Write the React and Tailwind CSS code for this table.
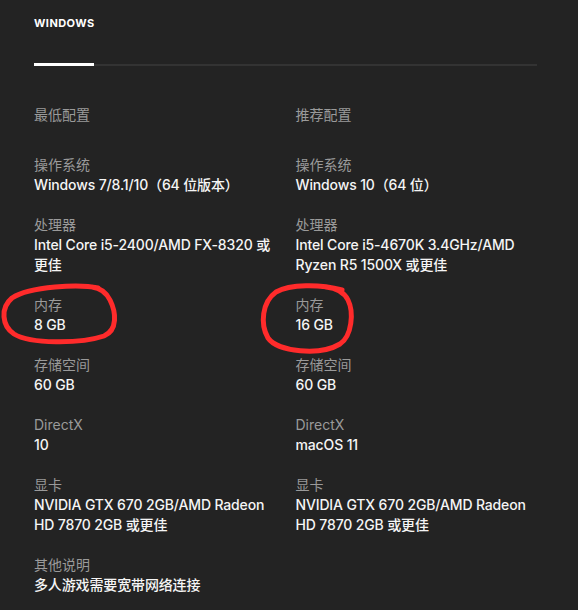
const MIN_SPECS = [
    { label: "操作系统", value: ["Windows 7/8.1/10（64 位版本）"] },
    { label: "处理器", value: ["Intel Core i5-2400/AMD FX-8320 或", "更佳"] },
    { label: "内存", value: ["8 GB"] },
    { label: "存储空间", value: ["60 GB"] },
    { label: "DirectX", value: ["10"] },
    { label: "显卡", value: ["NVIDIA GTX 670 2GB/AMD Radeon", "HD 7870 2GB 或更佳"] },
    { label: "其他说明", value: ["多人游戏需要宽带网络连接"] }
];

const REC_SPECS = [
    { label: "操作系统", value: ["Windows 10（64 位）"] },
    { label: "处理器", value: ["Intel Core i5-4670K 3.4GHz/AMD", "Ryzen R5 1500X 或更佳"] },
    { label: "内存", value: ["16 GB"] },
    { label: "存储空间", value: ["60 GB"] },
    { label: "DirectX", value: ["macOS 11"] },
    { label: "显卡", value: ["NVIDIA GTX 670 2GB/AMD Radeon", "HD 7870 2GB 或更佳"] }
];

function SpecColumn({ title, specs }) {
    return (
        <div className="flex flex-col">
            <div className="text-[14px] leading-5 text-[#9a9a9a] mb-[30px]">{title}</div>
            {specs.map((spec) => (
                <div key={spec.label} className="mb-5 text-[14px] leading-5">
                    <div className="text-[#9a9a9a]">{spec.label}</div>
                    {spec.value.map((line) => (
                        <div key={line} className="text-[#f5f5f5] font-medium tracking-[-0.01em] whitespace-nowrap">{line}</div>
                    ))}
                </div>
            ))}
        </div>
    );
}

export default function App() {
    return (
        <div
            className="relative w-[578px] h-[610px] overflow-hidden bg-[#232323] px-[34px]"
            style={{ fontFamily: '"Inter", "Noto Sans CJK SC", sans-serif' }}
        >
            <div className="pt-[15px]">
                <div className="text-[11px] leading-4 font-bold tracking-[0.04em] text-white">WINDOWS</div>
                <div className="mt-[32px] flex items-end w-[503px]">
                    <div className="w-[60px] h-[3px] bg-white" />
                    <div className="flex-1 h-[2px] bg-[#333333]" />
                </div>
            </div>

            <div className="mt-[39px] grid grid-cols-2 gap-x-5 w-[503px]">
                <SpecColumn title="最低配置" specs={MIN_SPECS} />
                <SpecColumn title="推荐配置" specs={REC_SPECS} />
            </div>

            {/* hand-drawn red annotations */}
            <svg className="absolute left-0 top-0 pointer-events-none" width="578" height="610">
                <path
                    d="M98 288 C80 284 30 286 12 298 C0 308 2 326 14 334 C30 344 80 344 104 336 C118 330 116 312 110 300 C106 292 100 288 92 287"
                    fill="none"
                    stroke="#ff2b2b"
                    strokeWidth="5"
                    strokeLinecap="round"
                />
                <path
                    d="M342 290 C320 284 290 284 276 292 C262 302 260 324 268 338 C278 352 320 356 340 344 C352 336 354 312 348 300 C344 292 336 288 326 287"
                    fill="none"
                    stroke="#ff2b2b"
                    strokeWidth="5"
                    strokeLinecap="round"
                />
            </svg>
        </div>
    );
}
